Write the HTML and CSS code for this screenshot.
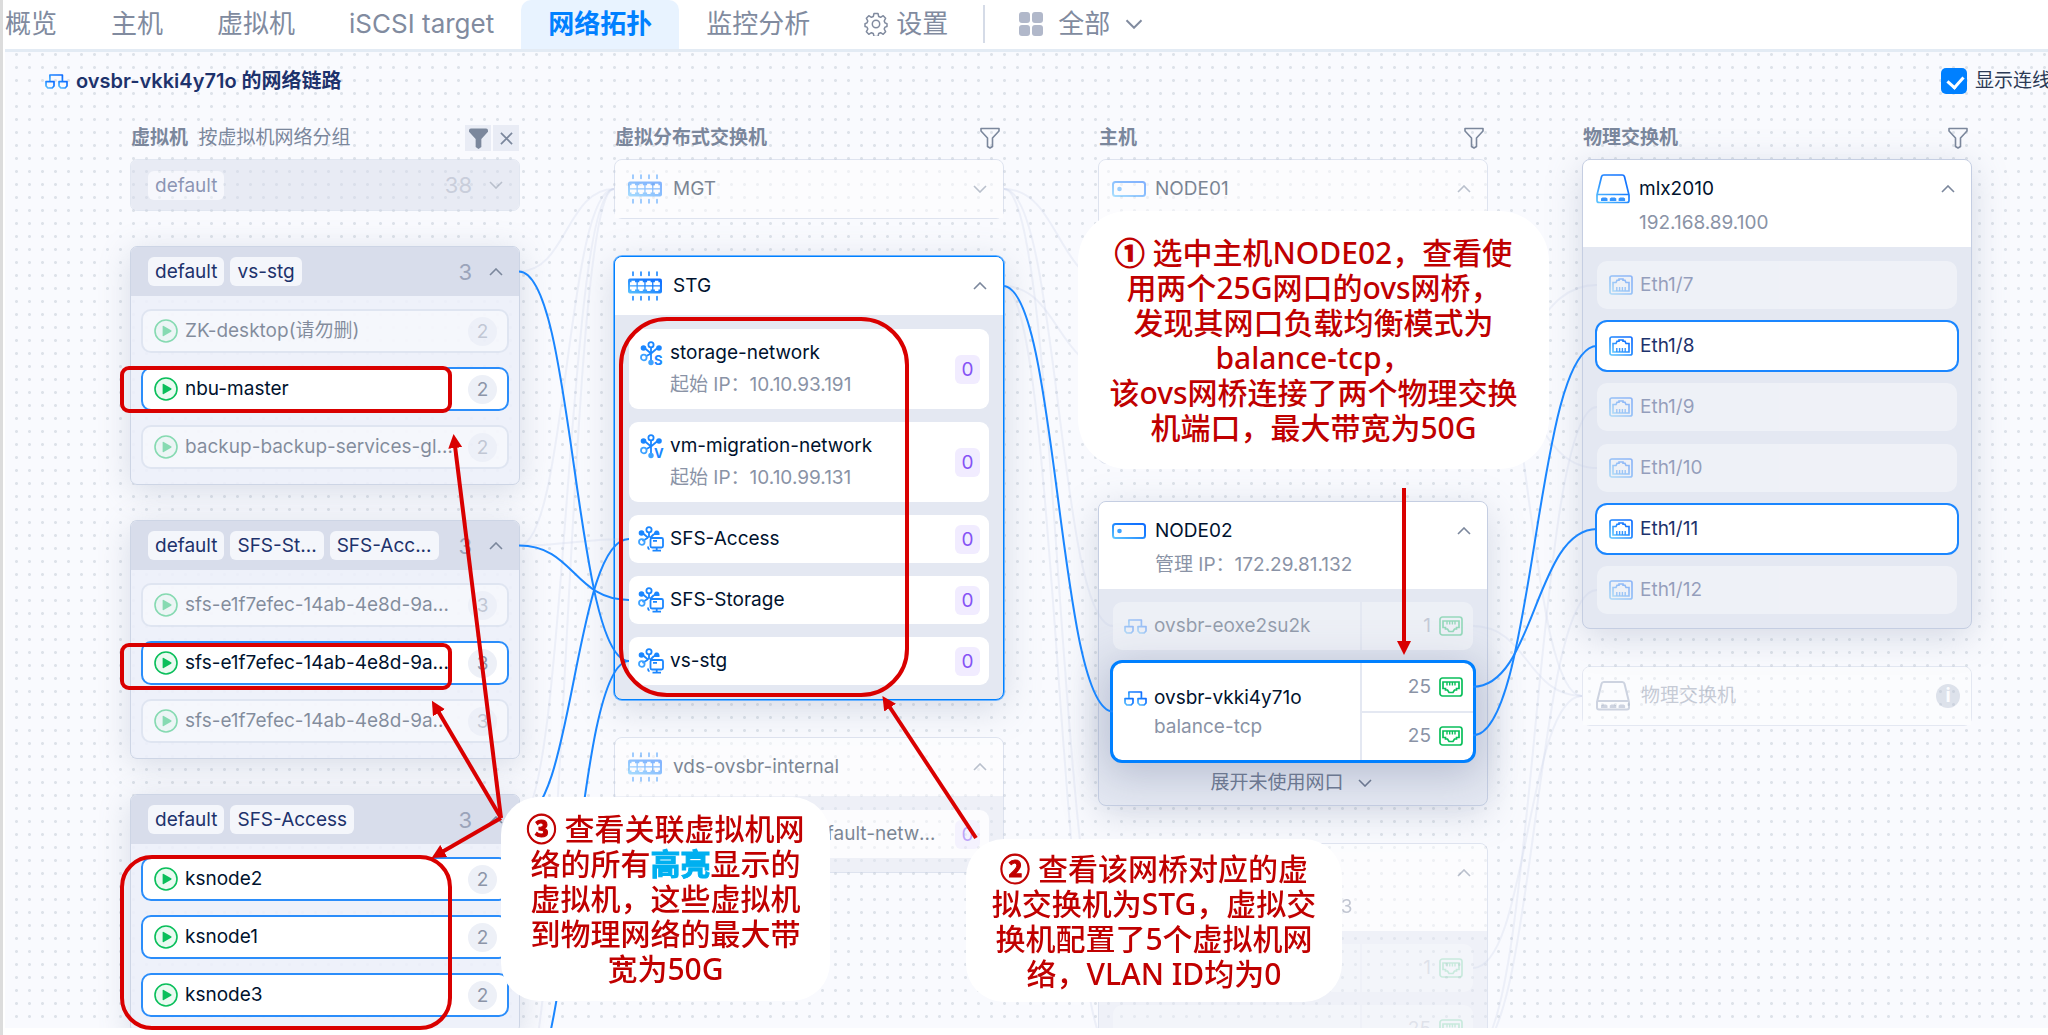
FILE: index.html
```html
<!DOCTYPE html>
<html lang="zh-CN">
<head>
  <meta charset="UTF-8">
  <meta name="viewport" content="width=device-width, initial-scale=1.0">
  <title>网络拓扑</title>
  <link rel="stylesheet" href="styles.css">
</head>
<body>

  <!-- icon sprite -->
  <svg class="sprite" aria-hidden="true">
    <defs>
      <linearGradient id="blue" x1="0" y1="1" x2="1" y2="0">
        <stop offset="0" stop-color="#5cc4ff"/>
        <stop offset="0.6" stop-color="#1a80ff"/>
        <stop offset="1" stop-color="#0f6cff"/>
      </linearGradient>
    </defs>
    <symbol id="i-up" viewBox="0 0 14 8"><path d="M1 7 7 1l6 6" fill="none" stroke="currentColor" stroke-width="1.6"/></symbol>
    <symbol id="i-down" viewBox="0 0 14 8"><path d="M1 1l6 6 6-6" fill="none" stroke="currentColor" stroke-width="1.6"/></symbol>
    <symbol id="i-filter" viewBox="0 0 20 22"><path d="M1 1.500h18v2.500l-6.500 7v8.500l-2.500 1.500-2.500-1.500V11L1 4z" fill="none" stroke="currentColor" stroke-width="1.600" stroke-linejoin="round"/></symbol>
    <symbol id="i-filter-on" viewBox="0 0 20 22"><path d="M2 .5h16q2 0 2 2V4l-7 7.500V20l-3 2-3-2v-8.500L0 4V2.500q0-2 2-2z" fill="currentColor"/></symbol>
    <symbol id="i-close" viewBox="0 0 14 14"><path d="M1 1l12 12M13 1 1 13" stroke="currentColor" stroke-width="1.800"/></symbol>
    <symbol id="i-bridge" viewBox="0 0 23 15"><g fill="none" stroke="url(#blue)" stroke-width="1.700" stroke-linejoin="round"><path d="M4.900 7.500V1h12.500v6.500"/><path d="M1 7.600h8v4.400l-1.800 2H2.800L1 12z"/><path d="M14 7.600h8v4.400l-1.800 2h-4.400L14 12z"/></g></symbol>
    <symbol id="i-play" viewBox="0 0 24 24"><circle cx="12" cy="12" r="11" fill="#eafaf1" stroke="#0abf5b" stroke-width="1.600"/><path d="M8.600 7.600q0-1.200 1.100-.6l7.400 4.200q1.200.8 0 1.600l-7.400 4.200q-1.100.6-1.100-.6z" fill="#0abf5b"/></symbol>
    <symbol id="i-vds" viewBox="0 0 34 30"><path d="M2 7.500h30q2 0 2 2v11q0 2-2 2H2q-2 0-2-2v-11q0-2 2-2z" fill="url(#blue)"/><g fill="#fff"><path id="vds-port" d="M2 14.200v-3h1.500v-1.400h3.500v1.400h1.500v3zM2 15.600v3h1.500V20H7v-1.400h1.500v-3z"/><use href="#vds-port" x="7.800"/><use href="#vds-port" x="15.600"/><use href="#vds-port" x="23.400"/></g><path d="M5 1v3.500M13 1v3.500M21 1v3.500M29 1v3.500M5 25.500V29M13 25.500V29M21 25.500V29M29 25.500V29" stroke="#1a86ff" stroke-width="1.600" stroke-linecap="round"/></symbol>
    <symbol id="i-hub" viewBox="0 0 26 26"><g fill="none" stroke="#1a86ff" stroke-width="1.800"><path d="M11 6.500v13M4.500 7l6.500 5.500L17.500 7M4.500 16l6.500-3.500"/><circle cx="11" cy="3.800" r="2.600" fill="#fff"/><circle cx="3.800" cy="16.500" r="2.800" fill="#fff" stroke="#3ea2ff"/></g><circle cx="3.500" cy="7" r="2.800" fill="#1a86ff"/><circle cx="19" cy="7" r="2.800" fill="#1a86ff"/><circle cx="11" cy="21.500" r="2.700" fill="#3ea2ff"/></symbol>
    <symbol id="i-vmnet" viewBox="0 0 26 26"><g fill="none" stroke="#1a86ff" stroke-width="1.800"><path d="M11 6.500v5M4.500 7l6 5M16 8l-4 4M4.500 15l5-3"/><circle cx="11" cy="3.800" r="2.600"/><circle cx="3.800" cy="16" r="2.800" stroke="#3ea2ff"/><path d="M10 20.500q0 2.500 1.500 3"/><rect x="12.500" y="12" width="12.500" height="9.500" rx="1.500" fill="#fff"/><path d="M15 14.800h4M18.700 21.500v3M14.500 24.700h8.500"/></g><circle cx="3.500" cy="7" r="2.800" fill="#1a86ff"/><path d="M16 9q-.5-4.500 2.700-4.500T21.500 9z" fill="#1a86ff"/></symbol>
    <symbol id="i-host" viewBox="0 0 34 16"><rect x="1" y="1" width="32" height="14" rx="2.500" fill="none" stroke="url(#blue)" stroke-width="2"/><circle cx="7.500" cy="8" r="2.300" fill="#3ea2ff"/></symbol>
    <symbol id="i-nic" viewBox="0 0 24 20"><rect x="1" y="1" width="22" height="18" rx="2.500" fill="none" stroke="#0abf5b" stroke-width="1.700"/><path d="M4 5h16v6.500h-2.500V13h-2l-1.500 2.500h-4L8.500 13h-2v-1.500H4z" fill="none" stroke="#0abf5b" stroke-width="1.700"/><path d="M8 5v3.500M10.700 5v3.500M13.400 5v3.500M16 5v3.500" stroke="#0abf5b" stroke-width="1.400"/></symbol>
    <symbol id="i-port" viewBox="0 0 24 20"><rect x="1" y="1" width="22" height="18" rx="1.800" fill="none" stroke="url(#blue)" stroke-width="1.700"/><path d="M4 16V7.500h3L8 5.300h2V4h4v1.300h2l1 2.200h3V16z" fill="none" stroke="url(#blue)" stroke-width="1.600"/><path d="M7.800 16v-4M10.600 16v-4M13.400 16v-4M16.200 16v-4" stroke="#3595ff" stroke-width="1.400"/></symbol>
    <symbol id="i-switch" viewBox="0 0 34 30"><path d="M1 21 5.500 2.800Q6 1 7.800 1h18.400q1.800 0 2.300 1.800L33 21v5.500q0 2-2 2H3q-2 0-2-2zM1 20.500h32" fill="none" stroke="url(#blue)" stroke-width="1.700"/><path d="M5 27v-2.500l1.500-1h3.500l1.500 1V27zM13.800 27v-2.500l1.500-1h3.500l1.500 1V27zM22.600 27v-2.500l1.500-1h3.500l1.500 1V27z" fill="#3595ff"/></symbol>
    <symbol id="i-switch-off" viewBox="0 0 34 30"><path d="M1 21 5.500 2.800Q6 1 7.800 1h18.400q1.800 0 2.300 1.800L33 21v5.500q0 2-2 2H3q-2 0-2-2zM1 20h32" fill="none" stroke="#8c9bb5" stroke-width="2"/><path d="M5 27v-2.500l1.500-1h3.500l1.500 1V27zM13.800 27v-2.500l1.500-1h3.500l1.500 1V27zM22.600 27v-2.500l1.500-1h3.500l1.500 1V27z" fill="#8c9bb5"/></symbol>
    <symbol id="i-gear" viewBox="0 0 24 24"><path d="M10 1.500h4l.7 3 1.900.8 2.600-1.600 2.400 2.600-1.400 2.700.8 1.900 2 .8v2.800l-2 .6-.8 1.900 1.400 2.700-2.400 2.600-2.600-1.600-1.900.8-.7 3h-4l-.7-3-1.900-.8-2.600 1.600-2.400-2.600L3.800 17 3 15.100l-2-.6v-2.800l2-.8.800-1.900-1.400-2.700 2.400-2.600 2.600 1.600 1.900-.8z" fill="none" stroke="currentColor" stroke-width="1.500" stroke-linejoin="round"/><circle cx="12" cy="12" r="3.700" fill="none" stroke="currentColor" stroke-width="1.500"/></symbol>
  </svg>

  <nav class="tabs">
    <a href="#">概览</a>
    <a href="#">主机</a>
    <a href="#">虚拟机</a>
    <a href="#">iSCSI target</a>
    <a href="#" class="active">网络拓扑</a>
    <a href="#">监控分析</a>
    <a href="#"><svg width="24" height="24"><use href="#i-gear"/></svg>设置</a>
    <span class="divider"></span>
    <button class="scope" type="button">
      <span class="squares"><i></i><i></i><i></i><i></i></span>全部
      <svg width="18" height="10"><use href="#i-down"/></svg>
    </button>
  </nav>

  <main class="board" id="board">
    <header class="board-head">
      <h1><svg width="23" height="15"><use href="#i-bridge"/></svg>ovsbr-vkki4y71o 的网络链路</h1>
      <label class="toggle"><input type="checkbox" checked>显示连线</label>
    </header>

    <div class="columns">

      <!-- VM groups -->
      <section class="col vms">
        <div class="col-head">
          <h2>虚拟机 <small>按虚拟机网络分组</small></h2>
          <span class="filter-on">
            <button type="button" aria-label="筛选"><svg width="19" height="21"><use href="#i-filter-on"/></svg></button>
            <button type="button" aria-label="清除筛选"><svg width="13" height="13"><use href="#i-close"/></svg></button>
          </span>
        </div>

        <div class="group faded" id="g-default">
          <div class="group-head"><span class="chip">default</span><span class="count">38</span><button type="button" aria-label="展开"><svg width="14" height="8"><use href="#i-down"/></svg></button></div>
        </div>

        <div class="group">
          <div class="group-head" id="g-stg"><span class="chip">default</span><span class="chip">vs-stg</span><span class="count">3</span><button type="button" aria-label="收起"><svg width="14" height="8"><use href="#i-up"/></svg></button></div>
          <ul>
            <li class="dim"><svg width="24" height="24"><use href="#i-play"/></svg><span class="name">ZK-desktop(请勿删)</span><span class="num">2</span></li>
            <li class="on"><svg width="24" height="24"><use href="#i-play"/></svg><span class="name">nbu-master</span><span class="num">2</span></li>
            <li class="dim"><svg width="24" height="24"><use href="#i-play"/></svg><span class="name">backup-backup-services-global</span><span class="num">2</span></li>
          </ul>
        </div>

        <div class="group">
          <div class="group-head" id="g-sfs"><span class="chip">default</span><span class="chip">SFS-St...</span><span class="chip">SFS-Acc...</span><span class="count">3</span><button type="button" aria-label="收起"><svg width="14" height="8"><use href="#i-up"/></svg></button></div>
          <ul>
            <li class="dim"><svg width="24" height="24"><use href="#i-play"/></svg><span class="name">sfs-e1f7efec-14ab-4e8d-9a4c-node1</span><span class="num">3</span></li>
            <li class="on"><svg width="24" height="24"><use href="#i-play"/></svg><span class="name">sfs-e1f7efec-14ab-4e8d-9a4c-node2</span><span class="num">3</span></li>
            <li class="dim"><svg width="24" height="24"><use href="#i-play"/></svg><span class="name">sfs-e1f7efec-14ab-4e8d-9a4c-node3</span><span class="num">3</span></li>
          </ul>
        </div>

        <div class="group">
          <div class="group-head" id="g-access"><span class="chip">default</span><span class="chip">SFS-Access</span><span class="count">3</span><button type="button" aria-label="收起"><svg width="14" height="8"><use href="#i-up"/></svg></button></div>
          <ul>
            <li class="on"><svg width="24" height="24"><use href="#i-play"/></svg><span class="name">ksnode2</span><span class="num">2</span></li>
            <li class="on"><svg width="24" height="24"><use href="#i-play"/></svg><span class="name">ksnode1</span><span class="num">2</span></li>
            <li class="on"><svg width="24" height="24"><use href="#i-play"/></svg><span class="name">ksnode3</span><span class="num">2</span></li>
          </ul>
        </div>

        <div class="group">
          <div class="group-head" id="g-more"></div>
        </div>
      </section>

      <!-- virtual distributed switches -->
      <section class="col">
        <div class="col-head">
          <h2>虚拟分布式交换机</h2>
          <button type="button" aria-label="筛选"><svg width="20" height="22"><use href="#i-filter"/></svg></button>
        </div>

        <div class="card faded" id="s-mgt">
          <div class="card-head"><svg width="34" height="30"><use href="#i-vds"/></svg><h3>MGT</h3><button type="button" aria-label="展开"><svg width="14" height="8"><use href="#i-down"/></svg></button></div>
        </div>

        <div class="card on">
          <div class="card-head" id="s-stg"><svg width="34" height="30"><use href="#i-vds"/></svg><h3>STG</h3><button type="button" aria-label="收起"><svg width="14" height="8"><use href="#i-up"/></svg></button></div>
          <ul class="nets">
            <li class="tall"><span class="hub"><svg width="26" height="26"><use href="#i-hub"/></svg><b>S</b></span><div class="name">storage-network<small>起始 IP：10.10.93.191</small></div><span class="vlan">0</span></li>
            <li class="tall"><span class="hub"><svg width="26" height="26"><use href="#i-hub"/></svg><b>V</b></span><div class="name">vm-migration-network<small>起始 IP：10.10.99.131</small></div><span class="vlan">0</span></li>
            <li id="n-access"><svg width="26" height="26"><use href="#i-vmnet"/></svg><div class="name">SFS-Access</div><span class="vlan">0</span></li>
            <li id="n-storage"><svg width="26" height="26"><use href="#i-vmnet"/></svg><div class="name">SFS-Storage</div><span class="vlan">0</span></li>
            <li id="n-stg"><svg width="26" height="26"><use href="#i-vmnet"/></svg><div class="name">vs-stg</div><span class="vlan">0</span></li>
          </ul>
        </div>

        <div class="card faded">
          <div class="card-head"><svg width="34" height="30"><use href="#i-vds"/></svg><h3>vds-ovsbr-internal</h3><button type="button" aria-label="收起"><svg width="14" height="8"><use href="#i-up"/></svg></button></div>
          <ul class="nets">
            <li><svg width="26" height="26"><use href="#i-vmnet"/></svg><div class="name">ovsbr-internal-default-network</div><span class="vlan">0</span></li>
          </ul>
        </div>
      </section>

      <!-- hosts -->
      <section class="col">
        <div class="col-head">
          <h2>主机</h2>
          <button type="button" aria-label="筛选"><svg width="20" height="22"><use href="#i-filter"/></svg></button>
        </div>

        <div class="card faded">
          <div class="card-head two"><svg width="34" height="16"><use href="#i-host"/></svg><h3>NODE01</h3><button type="button" aria-label="收起"><svg width="14" height="8"><use href="#i-up"/></svg></button></div>
          <div class="bridges">
            <div class="bridge" id="b1-mgt"></div>
            <div class="bridge big" id="b1-stg"></div>
            <div class="more"></div>
          </div>
        </div>

        <div class="card">
          <div class="card-head two"><svg width="34" height="16"><use href="#i-host"/></svg><h3>NODE02<small>管理 IP：172.29.81.132</small></h3><button type="button" aria-label="收起"><svg width="14" height="8"><use href="#i-up"/></svg></button></div>
          <div class="bridges">
            <div class="bridge dim" id="b2-mgt">
              <div class="label"><svg width="23" height="15"><use href="#i-bridge"/></svg><span>ovsbr-eoxe2su2k</span></div>
              <div class="nics"><div>1<svg width="24" height="20"><use href="#i-nic"/></svg></div></div>
            </div>
            <div class="bridge big selected" id="b2-stg">
              <div class="label"><svg width="23" height="15"><use href="#i-bridge"/></svg><span>ovsbr-vkki4y71o<small>balance-tcp</small></span></div>
              <div class="nics">
                <div id="nic1">25<svg width="24" height="20"><use href="#i-nic"/></svg></div>
                <div id="nic2">25<svg width="24" height="20"><use href="#i-nic"/></svg></div>
              </div>
            </div>
            <button class="more" type="button">展开未使用网口<svg width="14" height="8"><use href="#i-down"/></svg></button>
          </div>
        </div>

        <div class="card faded">
          <div class="card-head two"><svg width="34" height="16"><use href="#i-host"/></svg><h3><br><small>管理 IP：172.29.81.133</small></h3><button type="button" aria-label="收起"><svg width="14" height="8"><use href="#i-up"/></svg></button></div>
          <div class="bridges">
            <div class="bridge dim" id="b3-mgt"><div class="label"></div><div class="nics"><div>1<svg width="24" height="20"><use href="#i-nic"/></svg></div></div></div>
            <div class="bridge big dim" id="b3-stg"><div class="label"></div><div class="nics"><div>25<svg width="24" height="20"><use href="#i-nic"/></svg></div><div></div></div></div>
          </div>
        </div>
      </section>

      <!-- physical switches -->
      <section class="col">
        <div class="col-head">
          <h2>物理交换机</h2>
          <button type="button" aria-label="筛选"><svg width="20" height="22"><use href="#i-filter"/></svg></button>
        </div>

        <div class="card">
          <div class="card-head two"><svg width="34" height="30"><use href="#i-switch"/></svg><h3>mlx2010<small>192.168.89.100</small></h3><button type="button" aria-label="收起"><svg width="14" height="8"><use href="#i-up"/></svg></button></div>
          <ul class="ports">
            <li class="dim" id="eth7"><svg width="24" height="20"><use href="#i-port"/></svg>Eth1/7</li>
            <li class="on" id="eth8"><svg width="24" height="20"><use href="#i-port"/></svg>Eth1/8</li>
            <li class="dim" id="eth9"><svg width="24" height="20"><use href="#i-port"/></svg>Eth1/9</li>
            <li class="dim" id="eth10"><svg width="24" height="20"><use href="#i-port"/></svg>Eth1/10</li>
            <li class="on" id="eth11"><svg width="24" height="20"><use href="#i-port"/></svg>Eth1/11</li>
            <li class="dim" id="eth12"><svg width="24" height="20"><use href="#i-port"/></svg>Eth1/12</li>
          </ul>
        </div>

        <div class="card unknown" id="p-unknown">
          <div class="card-head"><svg width="34" height="30"><use href="#i-switch-off"/></svg><h3>物理交换机</h3><span class="info">i</span></div>
        </div>
      </section>
    </div>

    <svg class="links" id="links"></svg>
  </main>

  <!-- annotations -->
  <div class="notes">
    <div class="frame f1"></div>
    <div class="frame f2"></div>
    <div class="frame f3"></div>
    <div class="frame f4"></div>
    <svg class="arrows">
      <defs>
        <marker id="head" viewBox="0 0 14 14" refX="2" refY="7" markerWidth="14" markerHeight="14" markerUnits="userSpaceOnUse" orient="auto"><path d="M0 0l14 7-14 7z" fill="#d90000"/></marker>
      </defs>
      <path d="M501 818 455 446"/>
      <path d="M501 818 438 711"/>
      <path d="M501 818 442 852"/>
      <path d="M976 838 889 706"/>
      <path d="M1404 488V643"/>
    </svg>
    <p class="note n1"><b>①</b> 选中主机NODE02，查看使<br>用两个25G网口的ovs网桥，<br>发现其网口负载均衡模式为<br>balance-tcp，<br>该ovs网桥连接了两个物理交换<br>机端口，最大带宽为50G</p>
    <p class="note n2"><b>②</b> 查看该网桥对应的虚<br>拟交换机为STG，虚拟交<br>换机配置了5个虚拟机网<br>络，VLAN ID均为0</p>
    <p class="note n3"><b>③</b> 查看关联虚拟机网<br>络的所有<em>高亮</em>显示的<br>虚拟机，这些虚拟机<br>到物理网络的最大带<br>宽为50G</p>
  </div>

  <script>
    // [from, to, highlighted]
    const links = [
      ["g-stg", "s-mgt"], ["g-sfs", "s-mgt"],
      ["g-access", "s-mgt"], ["g-more", "s-mgt"], ["g-sfs", "n-access"],
      ["s-mgt", "b1-mgt"], ["s-mgt", "b2-mgt"], ["s-mgt", "b3-mgt"],
      ["s-stg", "b1-stg"], ["s-stg", "b3-stg"],
      ["b1-mgt", "p-unknown"], ["b2-mgt", "p-unknown"], ["b3-mgt", "p-unknown"],
      ["b1-stg", "eth10"], ["b3-stg", "eth9"], ["b3-stg", "eth12"], ["b1-stg", "eth7"],
      ["g-stg", "n-stg", true], ["g-sfs", "n-storage", true],
      ["g-access", "n-access", true], ["g-more", "n-stg", true],
      ["s-stg", "b2-stg", true],
      ["nic1", "eth11", true], ["nic2", "eth8", true]
    ];

    function drawLinks() {
      const base = document.getElementById("board").getBoundingClientRect();
      let html = "";
      for (const [from, to, on] of links) {
        const a = document.getElementById(from).getBoundingClientRect();
        const b = document.getElementById(to).getBoundingClientRect();
        const x1 = a.right - base.left, y1 = a.top + a.height / 2 - base.top;
        const x2 = b.left - base.left, y2 = b.top + b.height / 2 - base.top;
        const mid = (x1 + x2) / 2;
        html += `<path class="${on ? "on" : ""}" d="M${x1} ${y1}C${mid} ${y1} ${mid} ${y2} ${x2} ${y2}"/>`;
      }
      document.getElementById("links").innerHTML = html;
    }

    drawLinks();
    window.addEventListener("resize", drawLinks);
  </script>

</body>
</html>
```

FILE: styles.css
```css
* {
  box-sizing: border-box;
}
body {
  display: flex;
  flex-direction: column;
  position: relative;
  height: 100vh;
  margin: 0;
  padding: 0 0 7px 2px;
  border-left: 3px solid #dcdcdc;
  overflow: hidden;
  background: #fff;
  color: #00122e;
  font-family: Inter, "Noto Sans CJK SC", sans-serif;
  font-size: 19px;
  line-height: 26px;
}
h1, h2, h3, ul, p {
  margin: 0;
  padding: 0;
  font-size: inherit;
  font-weight: normal;
  list-style: none;
}
small {
  font-size: inherit;
}
button {
  display: flex;
  align-items: center;
  justify-content: center;
  padding: 0;
  border: 0;
  background: none;
  color: #7b879c;
  font: inherit;
  cursor: pointer;
}
svg {
  flex: none;
}
.sprite {
  position: absolute;
  width: 0;
  height: 0;
}

/* top tabs */
.tabs {
  display: flex;
  flex: none;
  align-items: center;
  height: 52px;
  border-bottom: 3px solid #e3ebf4;
  color: #818b9f;
  font-size: 26px;
  white-space: nowrap;
}
.tabs a {
  display: flex;
  align-items: center;
  gap: 8px;
  height: 49px;
  padding: 0 27px 2px;
  color: inherit;
  text-decoration: none;
}
.tabs a:first-child {
  padding-left: 0;
}
.tabs .active {
  border-radius: 10px 10px 0 0;
  background: #e8f3ff;
  color: #0080ff;
  font-weight: bold;
}
.divider {
  width: 2px;
  height: 38px;
  margin: 0 34px 2px 8px;
  background: #d5dbe7;
}
.scope {
  gap: 15px;
  padding-bottom: 2px;
  color: inherit;
}
.squares {
  display: grid;
  grid-template-columns: 11px 11px;
  gap: 2px;
}
.squares i {
  height: 11px;
  border-radius: 3px;
  background: #b1b8ca;
}

/* board */
.board {
  position: relative;
  flex: 1;
  min-height: 0;
  overflow: hidden;
  background: #f9fafe radial-gradient(circle, #dde2e9 1px, transparent 2px) 5px -4px / 13px 13px;
}
.board-head {
  display: flex;
  align-items: center;
  justify-content: space-between;
  height: 58px;
  margin-bottom: 15px;
  padding-left: 40px;
}
.board-head h1 {
  display: flex;
  align-items: center;
  gap: 8px;
  color: #1d326c;
  font-size: 20px;
  font-weight: 600;
}
.toggle {
  display: flex;
  align-items: center;
  gap: 8px;
  width: 107px;
  color: #2c3a55;
  white-space: nowrap;
}
.toggle input {
  flex: none;
  position: relative;
  width: 26px;
  height: 26px;
  margin: 0;
  border-radius: 5px;
  background: #0080ff;
  appearance: none;
}
.toggle input:checked::after {
  content: "";
  position: absolute;
  left: 9px;
  top: 5px;
  width: 8px;
  height: 12px;
  border: solid #fff;
  border-width: 0 3px 3px 0;
  transform: rotate(42deg);
}
.columns {
  display: grid;
  grid-template-columns: repeat(4, minmax(0, 1fr));
  gap: 94px;
  padding: 0 76px 0 125px;
}
.col {
  display: flex;
  flex-direction: column;
  gap: 37px;
}
.vms {
  gap: 35px;
}
.col-head {
  display: flex;
  align-items: center;
  justify-content: space-between;
  height: 26px;
  margin-bottom: -29px;
  color: #7b879c;
}
.vms .col-head {
  margin-bottom: -27px;
}
.col-head h2 {
  padding-left: 1px;
  font-weight: bold;
}
.col-head small {
  margin-left: 6px;
  font-weight: normal;
}
.col-head > button {
  margin-right: 4px;
}
.filter-on {
  display: flex;
  gap: 2px;
  margin-right: 1px;
}
.filter-on button {
  width: 26px;
  height: 26px;
  background: #e9ecf5;
}

/* vm groups */
.group {
  border: 1px solid #cdd5e5;
  border-radius: 7px;
  background: rgba(236, 240, 249, 0.9);
  box-shadow: 0 6px 32px rgba(107, 125, 153, 0.24);
}
.group-head {
  display: flex;
  align-items: center;
  gap: 6px;
  height: 49px;
  padding: 0 16px 0 17px;
  border-radius: 6px 6px 0 0;
  background: #d8ddeb;
}
.chip {
  height: 29px;
  padding: 0 7px;
  border-radius: 6px;
  background: #f4f6fb;
  color: #1d326c;
  line-height: 29px;
}
.count {
  margin-left: auto;
  color: #9ba4ba;
  font-size: 22px;
}
.group-head button {
  margin-left: 11px;
}
.group ul {
  display: grid;
  grid-template-columns: minmax(0, 1fr);
  gap: 14px;
  padding: 13px 10px 15px;
}
.group li {
  display: flex;
  align-items: center;
  gap: 7px;
  height: 44px;
  padding: 0 10px 0 11px;
  border: 2px solid #cfd8e8;
  border-radius: 10px;
  background: #fff;
}
.group li .name {
  flex: 1;
  overflow: hidden;
  text-overflow: ellipsis;
  white-space: nowrap;
}
.num {
  width: 29px;
  height: 29px;
  margin-left: 5px;
  border-radius: 50%;
  background: #edf0f7;
  color: #8c95a8;
  line-height: 29px;
  text-align: center;
}
.group li.on {
  border-color: #2b8dfa;
}
.group li.dim {
  opacity: 0.45;
}
.group.faded {
  opacity: 0.5;
  box-shadow: none;
}
.group.faded .group-head {
  height: 50px;
  border-radius: 6px;
}

/* cards */
.card {
  border: 1px solid #c5cee2;
  border-radius: 8px;
  background: #e4e8f2;
  box-shadow: 0 8px 36px rgba(107, 125, 153, 0.26);
}
.card.on {
  border-color: #0080ff;
  box-shadow: 0 0 0 1px #6bb3ff, 0 8px 36px rgba(107, 125, 153, 0.26);
}
.card-head {
  display: flex;
  align-items: center;
  gap: 11px;
  height: 58px;
  padding: 0 16px 0 13px;
  border-radius: 7px 7px 0 0;
  background: #fff;
}
.card-head h3 {
  flex: 1;
}
.card-head small,
.name small,
.label small {
  display: block;
  color: #8a93a6;
}
.card-head.two {
  align-items: flex-start;
  gap: 9px;
  height: 87px;
}
.card-head.two h3 {
  padding-top: 12px;
  line-height: 34px;
}
.card-head.two > svg {
  height: 58px;
}
.card-head.two button {
  height: 58px;
}
.nets,
.ports,
.bridges {
  display: grid;
  gap: 13px;
  padding: 14px;
}
.nets {
  grid-template-columns: minmax(0, 1fr);
}
.nets li {
  display: flex;
  align-items: center;
  gap: 6px;
  height: 48px;
  padding: 0 9px;
  border-radius: 9px;
  background: #fff;
}
.nets .tall {
  height: 80px;
}
.hub {
  position: relative;
  align-self: flex-start;
  height: 26px;
  margin: 12px 0 0 2px;
  width: 24px;
}
.hub b {
  position: absolute;
  right: 0;
  bottom: 0;
  width: 10px;
  background: #fff;
  color: #1a86ff;
  font-size: 13px;
  line-height: 13px;
}
.nets .name {
  flex: 1;
  overflow: hidden;
  text-overflow: ellipsis;
  white-space: nowrap;
}
.tall .name {
  line-height: 32px;
}
.vlan {
  width: 25px;
  height: 29px;
  margin-left: 8px;
  border-radius: 6px;
  background: #f1ecff;
  color: #8552f5;
  line-height: 29px;
  text-align: center;
}
.ports li {
  display: flex;
  align-items: center;
  gap: 7px;
  height: 48px;
  padding-left: 12px;
  border-radius: 10px;
  background: #fff;
  color: #1d326c;
}
.ports li.on {
  outline: 2px solid #1a86ff;
}
.ports li.dim {
  opacity: 0.4;
}
.bridges {
  padding: 13px 14px 0;
}
.bridge {
  display: flex;
  height: 48px;
  border-radius: 9px;
  background: #fff;
}
.bridge.big {
  height: 97px;
}
.bridge.dim {
  opacity: 0.35;
}
.bridge.selected {
  outline: 3px solid #0080ff;
  box-shadow: 0 8px 40px 8px rgba(95, 110, 145, 0.32);
}
.label {
  display: flex;
  flex: 1;
  align-items: center;
  gap: 7px;
  padding-left: 11px;
}
.big .label {
  align-items: flex-start;
  padding-top: 20px;
  line-height: 29px;
}
.big .label svg {
  margin-top: 8px;
}
.nics {
  display: flex;
  flex-direction: column;
  width: 113px;
  border-left: 2px solid #e4e8f2;
  color: #8a93a6;
}
.nics div {
  display: flex;
  flex: 1;
  align-items: center;
  justify-content: flex-end;
  gap: 8px;
  padding-right: 10px;
}
.nics div + div {
  border-top: 2px solid #e4e8f2;
}
.more {
  gap: 14px;
  height: 45px;
  margin-top: -13px;
  padding-right: 4px;
  color: #6b7790;
}
.card.faded,
.card.unknown {
  opacity: 0.5;
  box-shadow: none;
}
.card.unknown {
  opacity: 0.4;
  background: #fff;
}
.unknown h3 {
  color: #7b879c;
}
.info {
  width: 24px;
  height: 24px;
  margin-right: -5px;
  border-radius: 50%;
  background: #b5bfd0;
  color: #fff;
  font-weight: bold;
  line-height: 24px;
  text-align: center;
}

/* link lines */
.links,
.arrows {
  position: absolute;
  left: 0;
  top: 0;
  width: 100%;
  height: 100%;
  pointer-events: none;
}
.links path {
  fill: none;
  stroke: rgba(190, 200, 226, 0.22);
  stroke-width: 2;
}
.links .on {
  stroke: #1a86ff;
}

/* annotations */
.notes {
  position: absolute;
  top: 0;
  bottom: 0;
  left: -3px;
  right: 0;
  overflow: hidden;
  pointer-events: none;
}
.arrows path {
  stroke: #d90000;
  stroke-width: 4;
  marker-end: url(#head);
}
.arrows marker path {
  stroke: none;
  marker-end: none;
}
.frame {
  position: absolute;
  left: 120px;
  width: 332px;
  height: 47px;
  border: 4px solid #d90000;
  border-radius: 9px;
}
.f1 {
  top: 366px;
}
.f2 {
  top: 643px;
}
.f3 {
  top: 855px;
  height: 175px;
  border-radius: 32px;
}
.f4 {
  top: 317px;
  left: 619px;
  width: 290px;
  height: 380px;
  border-radius: 48px;
}
.note {
  position: absolute;
  border-radius: 38px;
  background: #fff;
  color: #c00000;
  font-family: "Noto Sans", "Noto Sans CJK SC", sans-serif;
  font-size: 30px;
  font-weight: 500;
  line-height: 35px;
  text-align: center;
  white-space: nowrap;
}
.note b,
.note em {
  font-style: normal;
  font-weight: bold;
  -webkit-text-stroke: 1px currentColor;
}
.note em {
  color: #00b0f0;
}
.n1 {
  top: 211px;
  left: 1078px;
  width: 471px;
  padding: 24px 0;
  border-radius: 50px;
}
.n2 {
  top: 839px;
  left: 966px;
  width: 376px;
  padding: 12px 0 11px;
}
.n3 {
  top: 797px;
  left: 501px;
  width: 329px;
  padding: 14px 0 15px;
}
```
